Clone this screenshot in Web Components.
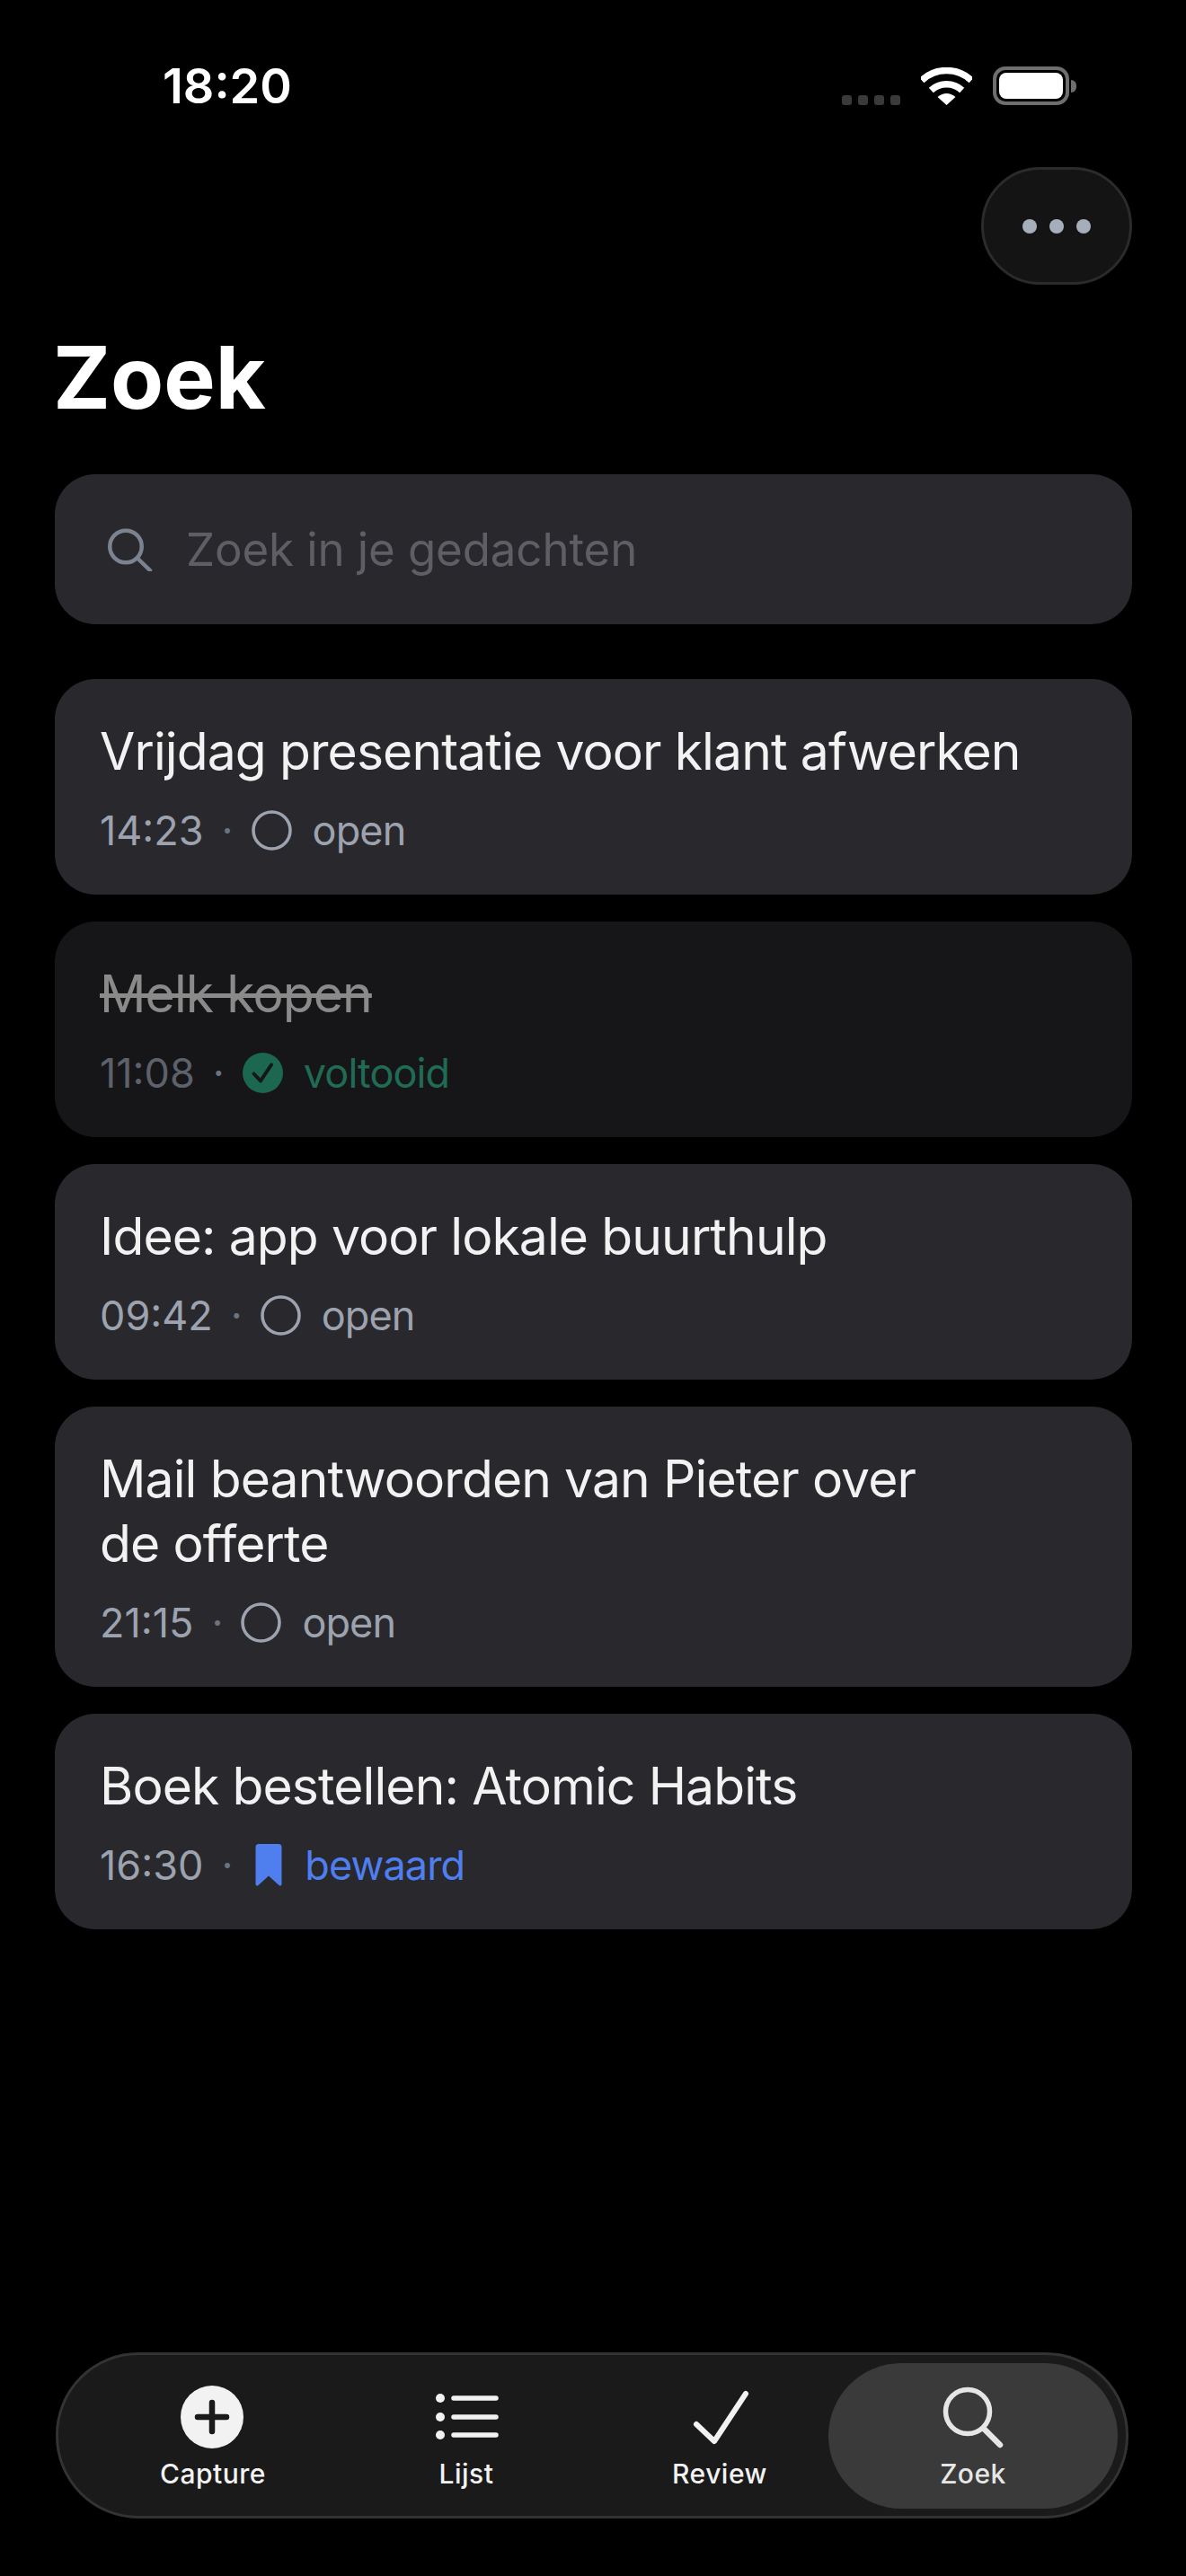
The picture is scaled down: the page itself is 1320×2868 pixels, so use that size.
<!DOCTYPE html>
<html lang="nl">
<head>
<meta charset="utf-8">
<title>Zoek</title>
<style>
  html, body { margin: 0; background: #000; }
  body { font-family: Inter, "Liberation Sans", sans-serif; }
</style>
</head>
<body>
<search-app></search-app>

<script>
(function () {
  // small helper, every element below has a fixed bit of markup
  function define(name, html, extra) {
    const template = document.createElement("template");
    template.innerHTML = html;
    class El extends HTMLElement {
      constructor() {
        super();
        this.attachShadow({ mode: "open" });
        this.shadowRoot.appendChild(template.content.cloneNode(true));
      }
      connectedCallback() {
        if (extra) extra(this);
      }
    }
    customElements.define(name, El);
  }

  const metaIcons = {
    open: `<svg width="45" height="45" viewBox="0 0 45 45"><circle cx="22.5" cy="22.5" r="20.5" fill="none" stroke="#9ca3af" stroke-width="3.6"/></svg>`,
    done: `<svg width="45" height="45" viewBox="0 0 45 45"><circle cx="22.5" cy="22.5" r="22.5" fill="#1b674f"/><path d="M12.5 23.5 L20 31.5 L32 13.5" fill="none" stroke="#161618" stroke-width="4" stroke-linecap="round" stroke-linejoin="round"/></svg>`,
    saved: `<svg width="40" height="47" viewBox="0 0 40 47" style="margin-right:-3px"><path d="M9 0 H31 Q34.500 0 34.500 3.500 V44.500 Q34.500 47 32.500 46.500 Q32 46.500 31 45.500 L20 35.500 L9 45.500 Q8 46.500 7.500 46.500 Q5.500 47 5.500 44.500 V3.500 Q5.500 0 9 0 Z" fill="#4f7fee"/></svg>`
  };

  const tabIcons = {
    capture: `<circle cx="41" cy="42" r="35" fill="#f2f2f2"/><path d="M25 42 H57 M41 26 V58" stroke="#1a1a1a" stroke-width="6.500" stroke-linecap="round"/>`,
    list: `<circle cx="13" cy="21" r="5" fill="#f2f2f2"/><circle cx="13" cy="42" r="5" fill="#f2f2f2"/><circle cx="13" cy="62" r="5" fill="#f2f2f2"/><path d="M28 21 H75 M28 42 H75 M28 62 H75" stroke="#f2f2f2" stroke-width="5.500" stroke-linecap="round"/>`,
    review: `<path d="M16 50 L36 69 L71 16" fill="none" stroke="#f2f2f2" stroke-width="6" stroke-linecap="round" stroke-linejoin="round"/>`,
    search: `<circle cx="36" cy="36" r="24.500" fill="none" stroke="#e6e6e6" stroke-width="5.500"/><path d="M54 55 L72 73" stroke="#e6e6e6" stroke-width="6.500" stroke-linecap="round"/>`
  };

  define("status-bar", `
    <style>
      :host { display: flex; align-items: flex-end; padding: 75px 122px 0 181px; height: 42px; }
      .time { font-size: 54px; font-weight: 600; line-height: 42px; color: #fff; margin-right: auto; }
      .signal { display: flex; gap: 7px; margin-right: 23px; }
      .signal i { width: 11px; height: 11px; border-radius: 3px; background: #3a3a3a; }
      .wifi { display: block; margin-right: 23px; }
      .battery { display: flex; align-items: center; gap: 2px; }
      .case { box-sizing: border-box; width: 85px; height: 43px; border: 4px solid #6e6e6e; border-radius: 14px; padding: 3px; }
      .case div { height: 100%; background: #fff; border-radius: 8px; }
      .cap { width: 6px; height: 14px; background: #6e6e6e; border-radius: 0 7px 7px 0; }
    </style>
    <span class="time">18:20</span>
    <div class="signal"><i></i><i></i><i></i><i></i></div>
    <svg class="wifi" width="57" height="42" viewBox="0 0 57 42">
      <path d="M0.900 14.400 A40.500 40.500 0 0 1 56.100 14.400" fill="none" stroke="#fff" stroke-width="7.500"/>
      <path d="M11.300 25.500 A25.500 25.500 0 0 1 45.700 25.500" fill="none" stroke="#fff" stroke-width="7.500"/>
      <path d="M28.500 42 L18.500 33 Q28.500 25 38.500 33 Z" fill="#fff"/>
    </svg>
    <div class="battery"><div class="case"><div></div></div><div class="cap"></div></div>
  `);

  define("menu-button", `
    <style>
      :host { display: flex; align-self: flex-end; justify-content: center; align-items: center; gap: 14px;
        box-sizing: border-box; width: 168px; height: 131px; border-radius: 66px;
        background: #141414; border: 3px solid #2b2b2b; }
      i { width: 16px; height: 16px; border-radius: 50%; background: #a6adbb; }
    </style>
    <i></i><i></i><i></i>
  `);

  define("search-field", `
    <style>
      :host { display: flex; align-items: center; gap: 37px; box-sizing: border-box; height: 167px;
        padding-left: 58px; border-radius: 45px; background: #28282d; }
      svg { flex: none; }
      span { font-size: 51px; letter-spacing: -0.1px; color: #5e5e64; }
    </style>
    <svg width="51" height="48" viewBox="0 0 51 48">
      <circle cx="21" cy="20.500" r="17.750" fill="none" stroke="#7b8290" stroke-width="4.500"/>
      <path d="M34 33.500 L48 47" stroke="#7b8290" stroke-width="4.500" stroke-linecap="round"/>
    </svg>
    <span><slot></slot></span>
  `);

  define("thought-card", `
    <style>
      :host { display: block; box-sizing: border-box; padding: 45px 50px; border-radius: 45px; background: #28282d; }
      :host([status="done"]) { background: #161618; }
      .title { font-size: 57px; line-height: 72px; letter-spacing: -0.9px; color: #f2f2f2; }
      :host([status="done"]) .title { color: #8a8a8a; text-decoration: line-through; }
      .meta { display: flex; align-items: center; height: 54px; margin-top: 24px; font-size: 45px; color: #9ca3af; }
      :host([status="done"]) .time { color: #5c616b; }
      .sep { width: 53px; text-align: center; color: #6b7280; }
      .icon { display: flex; margin-right: 23px; }
      .label { letter-spacing: -0.9px; }
      :host([status="done"]) .label { color: #1f6b54; }
      :host([status="saved"]) .label { color: #4f7fee; }
    </style>
    <div class="title"><slot></slot></div>
    <div class="meta">
      <span class="time"></span>
      <span class="sep">·</span>
      <span class="icon"></span>
      <span class="label"></span>
    </div>
  `, function (el) {
    const root = el.shadowRoot;
    const status = el.getAttribute("status") || "open";
    root.querySelector(".time").textContent = el.getAttribute("time");
    root.querySelector(".icon").innerHTML = metaIcons[status];
    root.querySelector(".label").textContent = el.getAttribute("label");
  });

  define("tab-item", `
    <style>
      :host { display: flex; flex-direction: column; align-items: center; position: relative;
        height: 162px; box-sizing: border-box; padding-top: 18px; }
      :host([active])::before { content: ""; position: absolute; top: 0; bottom: 0; left: -20px; right: -20px;
        background: #3a3a3a; border-radius: 81px; }
      svg, span { position: relative; }
      span { margin-top: 3px; font-size: 30px; font-weight: 500; line-height: 36px; color: #f2f2f2; letter-spacing: 0.5px; }
      :host([active]) span { color: #e6e6e6; }
    </style>
    <svg width="84" height="84" viewBox="0 0 84 84"></svg>
    <span><slot></slot></span>
  `, function (el) {
    el.shadowRoot.querySelector("svg").innerHTML = tabIcons[el.getAttribute("icon")];
  });

  define("tab-bar", `
    <style>
      :host { display: grid; grid-template-columns: repeat(4, 282px); box-sizing: border-box;
        height: 185px; padding: 9px 31px; border: 3px solid #333; border-radius: 92px; background: #1a1a1a; }
    </style>
    <slot></slot>
  `);

  define("search-app", `
    <style>
      :host { display: flex; flex-direction: column; box-sizing: border-box; height: 2868px; padding-bottom: 64px; }
      main { display: flex; flex-direction: column; padding: 69px 60px 0 61px; }
      h1 { margin: 43px 0 48px -2px; font-size: 96.5px; line-height: 120px; font-weight: 700; color: #fff; }
      .cards { display: flex; flex-direction: column; gap: 30px; margin-top: 61px; }
      tab-bar { margin: auto 64px 0 62px; }
    </style>
    <status-bar></status-bar>
    <main>
      <menu-button></menu-button>
      <h1>Zoek</h1>
      <search-field>Zoek in je gedachten</search-field>
      <div class="cards">
        <thought-card time="14:23" label="open">Vrijdag presentatie voor klant afwerken</thought-card>
        <thought-card time="11:08" status="done" label="voltooid">Melk kopen</thought-card>
        <thought-card time="09:42" label="open">Idee: app voor lokale buurthulp</thought-card>
        <thought-card time="21:15" label="open">Mail beantwoorden van Pieter over<br>de offerte</thought-card>
        <thought-card time="16:30" status="saved" label="bewaard">Boek bestellen: Atomic Habits</thought-card>
      </div>
    </main>
    <tab-bar>
      <tab-item icon="capture">Capture</tab-item>
      <tab-item icon="list">Lijst</tab-item>
      <tab-item icon="review">Review</tab-item>
      <tab-item icon="search" active>Zoek</tab-item>
    </tab-bar>
  `);
})();
</script>
</body>
</html>
